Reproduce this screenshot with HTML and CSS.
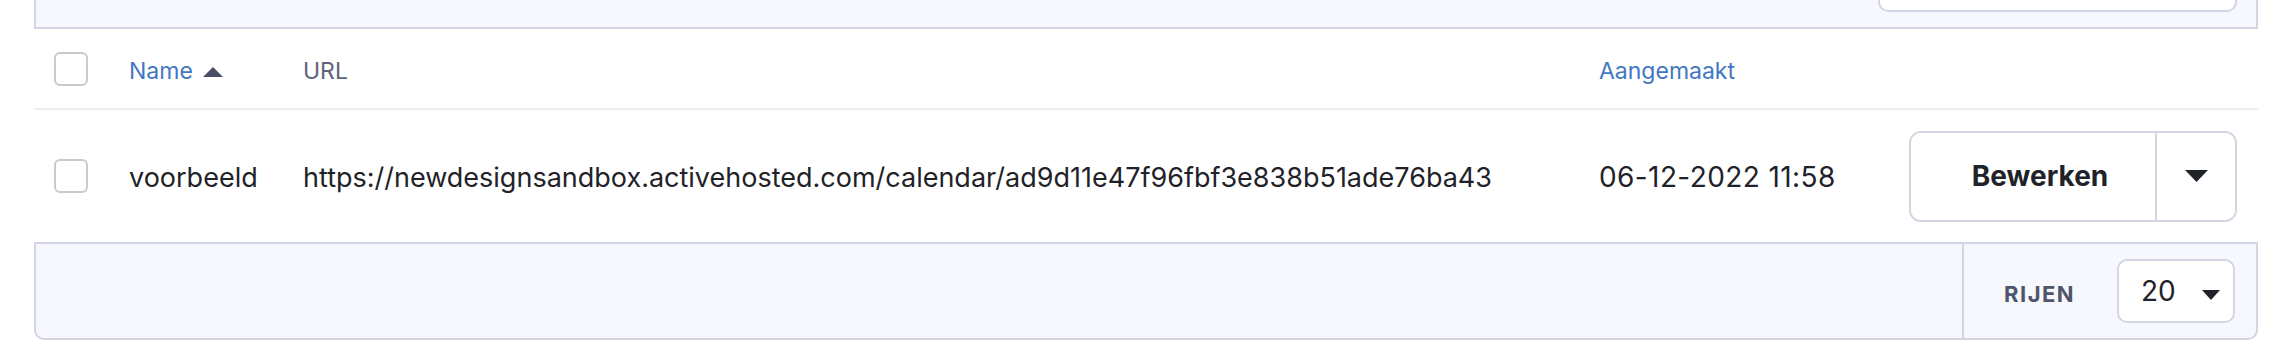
FILE: index.html
```html
<!DOCTYPE html>
<html lang="nl">
<head>
<meta charset="utf-8">
<title>Kalenders</title>
<link rel="stylesheet" href="styles.css">
</head>
<body>
<div class="page">
  <div class="toolbar">
    <div class="search"></div>
  </div>
  <div class="table">
    <div class="row head">
      <div class="cell"><span class="check"></span></div>
      <div class="cell sortable">Name <svg class="sort" width="20" height="10" viewBox="0 0 20 10"><path d="M0 10 L10 0 L20 10 Z"/></svg></div>
      <div class="cell plain">URL</div>
      <div class="cell sortable">Aangemaakt</div>
      <div class="cell"></div>
    </div>
    <div class="row body">
      <div class="cell"><span class="check"></span></div>
      <div class="cell">voorbeeld</div>
      <div class="cell">https://newdesignsandbox.activehosted.com/calendar/ad9d11e47f96fbf3e838b51ade76ba43</div>
      <div class="cell date">06-12-2022 11:58</div>
      <div class="cell">
        <div class="split">
          <button class="split-main">Bewerken</button>
          <button class="split-toggle"><svg width="23" height="12" viewBox="0 0 23 12"><path d="M0 0 H23 L11.5 12 Z"/></svg></button>
        </div>
      </div>
    </div>
  </div>
  <div class="footer">
    <div class="footer-fill"></div>
    <div class="footer-rows">
      <span class="rows-label">RIJEN</span>
      <div class="select"><span>20</span><svg width="18" height="10" viewBox="0 0 18 10"><path d="M0 0 H18 L9 10 Z"/></svg></div>
    </div>
  </div>
</div>
</body>
</html>
```

FILE: styles.css
```css
html, body {
  margin: 0;
  padding: 0;
  background: #ffffff;
}
body {
  font-family: Inter, "Noto Sans", "Liberation Sans", sans-serif;
  color: #1f2329;
  overflow: hidden;
}
.page {
  margin-left: 34px;
  width: 2224px;
}
.toolbar {
  margin-top: -29px;
  height: 58px;
  box-sizing: border-box;
  background: #f7f8fd;
  border: 2px solid #d3d5e3;
  border-top: none;
  display: flex;
  justify-content: flex-end;
  align-items: flex-end;
  padding: 0 19px 15px 0;
}
.search {
  width: 359px;
  height: 40px;
  box-sizing: border-box;
  background: #fff;
  border: 2px solid #d3d5e3;
  border-radius: 10px;
}
.row {
  display: grid;
  grid-template-columns: 75px 174px 1296px 310px 328px;
  padding: 0 21px 0 20px;
  align-items: center;
}
.row.head {
  height: 79px;
  border-bottom: 2px solid #eceef4;
  font-size: 23px;
}
.row.body {
  height: 132px;
  font-size: 27px;
}
.cell {
  display: flex;
  align-items: center;
  white-space: nowrap;
}
.head .cell { padding-top: 5px; }
.head .cell:first-child { padding-top: 0; }
.body .cell { padding-top: 2px; }
.body .cell:first-child, .body .cell:last-child { padding-top: 0; }
.date {
  font-size: 28px;
  letter-spacing: 0.4px;
}
.sortable { color: #3f77c2; }
.plain { color: #5d6479; }
.sort {
  fill: #4a5064;
  margin-left: 10px;
  margin-top: 1px;
}
.check {
  display: block;
  width: 34px;
  height: 34px;
  box-sizing: border-box;
  border: 2px solid #cacaca;
  border-radius: 6px;
  background: #fff;
}
.split {
  display: flex;
  width: 328px;
  height: 91px;
  box-sizing: border-box;
  border: 2px solid #d3d5e3;
  border-radius: 12px;
  overflow: hidden;
  background: #fff;
}
.split button {
  border: none;
  background: #fff;
  margin: 0;
  padding: 0;
  font: inherit;
  display: flex;
  align-items: center;
  justify-content: center;
}
.split-main {
  width: 246px;
  border-right: 2px solid #d3d5e3 !important;
  font-weight: 700 !important;
  font-size: 28px !important;
  color: #1f2329;
  padding-left: 14px !important;
}
.split-toggle {
  flex: 1;
}
.split-toggle svg { fill: #1f2329; }
.footer {
  display: flex;
  height: 98px;
  box-sizing: border-box;
  background: #f7f8fd;
  border: 2px solid #d3d5e3;
  border-radius: 0 0 10px 10px;
}
.footer-fill {
  flex: 1;
  border-right: 2px solid #d3d5e3;
}
.footer-rows {
  width: 292px;
  display: flex;
  align-items: center;
  padding-left: 40px;
  box-sizing: border-box;
}
.rows-label {
  font-size: 22px;
  font-weight: 700;
  letter-spacing: 1.5px;
  color: #4f566b;
  margin-top: 6px;
  width: 113px;
}
.select {
  width: 118px;
  height: 64px;
  box-sizing: border-box;
  background: #fff;
  border: 2px solid #d3d5e3;
  border-radius: 10px;
  display: flex;
  align-items: center;
  padding-left: 22px;
  font-size: 28px;
  color: #1f2329;
}
.select svg {
  fill: #1f2329;
  margin-left: 26px;
  margin-top: 8px;
}
```
